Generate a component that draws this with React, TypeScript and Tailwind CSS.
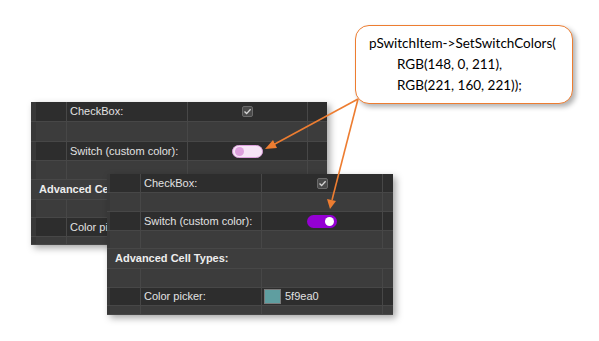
import React from "react";

type Kind = "dark" | "light" | "header";

interface RowDef {
  h: string;
  kind: Kind;
  label?: string;
  value?: React.ReactNode;
}

interface PanelProps {
  className: string;
  strip: string;
  first: string;
  label: string;
  value: string;
  rows: RowDef[];
}

function CheckBox() {
  return (
    <div className="flex h-[11px] w-[11px] items-center justify-center rounded-[2px] border border-[#6b6b6b] bg-[#4a4a4a]">
      <svg width="9" height="9" viewBox="0 0 9 9">
        <path d="M1.5 4.6 L3.6 6.6 L7.6 2.2" fill="none" stroke="#d6d6d6" strokeWidth="1.4" />
      </svg>
    </div>
  );
}

function Switch({ on }: { on: boolean }) {
  if (on) {
    return (
      <div className="flex h-[13px] w-[30px] items-center justify-end rounded-full bg-[#9400d3] pr-[3px]">
        <div className="h-[9px] w-[9px] rounded-full bg-white" />
      </div>
    );
  }
  return (
    <div className="flex h-[13px] w-[31px] items-center rounded-full border border-[#dda0dd] bg-[#f6e4f6] pl-[2px]">
      <div className="h-[9px] w-[9px] rounded-full bg-[#dda0dd]" />
    </div>
  );
}

function ColorValue() {
  return (
    <div className="flex items-center gap-[4px] pl-[2px]">
      <div className="h-[15px] w-[17px] border border-[#7a7a7a] bg-[#5f9ea0]" />
      <span>5f9ea0</span>
    </div>
  );
}

function Panel({ className, strip, first, label, value, rows }: PanelProps) {
  return (
    <div
      className={`absolute flex flex-col overflow-hidden bg-[#2d2d2d] font-['Liberation_Sans',sans-serif] text-[11px] text-[#e2e2e2] shadow-[3px_3px_7px_rgba(0,0,0,0.35)] ${className}`}
    >
      {rows.map((r, i) => {
        if (r.kind === "header") {
          return (
            <div
              key={i}
              className={`flex shrink-0 items-center border-b border-[#474747] bg-[#3d3d3d] pl-[8px] font-bold text-[#ededed] ${r.h}`}
            >
              {r.label}
            </div>
          );
        }
        const bg = r.kind === "dark" ? "bg-[#2d2d2d]" : "bg-[#3c3c3c]";
        return (
          <div key={i} className={`flex shrink-0 border-b border-[#474747] ${bg} ${r.h}`}>
            <div className={`shrink-0 bg-[#383838] ${strip}`} />
            <div className={`shrink-0 border-r border-[#474747] ${first}`} />
            <div className={`flex shrink-0 items-center overflow-hidden whitespace-nowrap border-r border-[#474747] pl-[3px] ${label}`}>
              {r.label}
            </div>
            <div className={`flex shrink-0 items-center border-r border-[#474747] ${value}`}>
              {r.value}
            </div>
            <div className="flex-1" />
          </div>
        );
      })}
    </div>
  );
}

export default function App() {
  const rows1: RowDef[] = [
    { h: "h-[20px]", kind: "dark", label: "CheckBox:", value: <CheckBox /> },
    { h: "h-[20px]", kind: "light" },
    { h: "h-[19px]", kind: "dark", label: "Switch (custom color):", value: <Switch on={false} /> },
    { h: "h-[19px]", kind: "light" },
    { h: "h-[20px]", kind: "header", label: "Advanced Cell Types:" },
    { h: "h-[18px]", kind: "light" },
    { h: "h-[19px]", kind: "dark", label: "Color picker:", value: <ColorValue /> },
    { h: "h-[8px]", kind: "light" },
  ];
  const rows2: RowDef[] = [
    { h: "h-[19px]", kind: "dark", label: "CheckBox:", value: <CheckBox /> },
    { h: "h-[19px]", kind: "light" },
    { h: "h-[19px]", kind: "dark", label: "Switch (custom color):", value: <Switch on={true} /> },
    { h: "h-[18px]", kind: "light" },
    { h: "h-[20px]", kind: "header", label: "Advanced Cell Types:" },
    { h: "h-[19px]", kind: "light" },
    { h: "h-[18px]", kind: "dark", label: "Color picker:", value: <ColorValue /> },
    { h: "h-[9px]", kind: "light" },
  ];

  // value cells: centered except the color picker row
  const withAlign = (rows: RowDef[]) =>
    rows.map((r) =>
      r.label === "Color picker:" || !r.value
        ? r
        : { ...r, value: <div className="flex w-full justify-center">{r.value}</div> }
    );

  return (
    <div className="relative h-[341px] w-[599px] overflow-hidden bg-white">
      <Panel
        className="left-[31px] top-[102px] h-[143px] w-[296px]"
        strip="w-[5px]"
        first="w-[31px]"
        label="w-[121px]"
        value="w-[120px]"
        rows={withAlign(rows1)}
      />
      <Panel
        className="left-[107px] top-[174px] h-[141px] w-[286px]"
        strip="w-[3px]"
        first="w-[31px]"
        label="w-[121px]"
        value="w-[121px]"
        rows={withAlign(rows2)}
      />

      {/* callout */}
      <div className="absolute left-[355px] top-[25px] flex h-[79px] w-[218px] flex-col rounded-[14px] border-[1.5px] border-[#ed7d31] bg-white pl-[13px] pt-[7px] font-['Lato',sans-serif] text-[13.5px] leading-[21px] text-black shadow-[3px_3px_5px_rgba(0,0,0,0.3)]">
        <span>pSwitchItem-&gt;SetSwitchColors(</span>
        <span className="pl-[28px]">RGB(148, 0, 211),</span>
        <span className="pl-[28px]">RGB(221, 160, 221));</span>
      </div>

      {/* arrows */}
      <svg className="pointer-events-none absolute left-0 top-0" width="599" height="341">
        <line x1="358" y1="99" x2="273" y2="145" stroke="#ed7d31" strokeWidth="1.6" />
        <polygon points="265,149 273,140 277,148" fill="#ed7d31" />
        <line x1="358" y1="99" x2="332" y2="200" stroke="#ed7d31" strokeWidth="1.6" />
        <polygon points="330,209 327,199 336,201" fill="#ed7d31" />
      </svg>
    </div>
  );
}
